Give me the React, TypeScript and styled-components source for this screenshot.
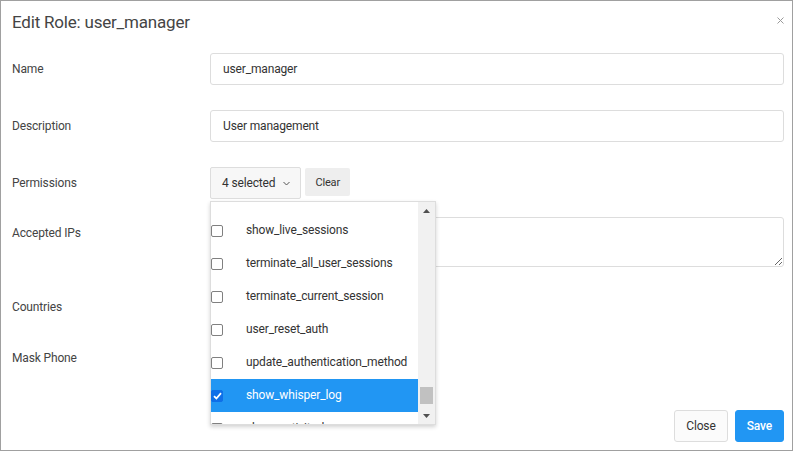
import React from "react";
import styled, { createGlobalStyle } from "styled-components";

const GlobalStyle = createGlobalStyle`
  html, body {
    margin: 0;
    padding: 0;
    background: #ffffff;
  }
  body {
    font-family: Roboto, "Liberation Sans", Arial, sans-serif;
    color: #333333;
    letter-spacing: -0.15px;
  }
  * {
    box-sizing: border-box;
  }
`;

const Frame = styled.div`
  position: relative;
  width: 793px;
  height: 451px;
  border: 1px solid #a0a0a0;
  background: #ffffff;
  display: flex;
  flex-direction: column;
`;

const Header = styled.div`
  display: flex;
  align-items: flex-start;
  justify-content: space-between;
  padding: 9px 6px 9px 11px;
`;

const Title = styled.h4`
  margin: 0;
  font-size: 17px;
  line-height: 24px;
  font-weight: 400;
  letter-spacing: -0.2px;
  color: #444444;
`;

const CloseX = styled.button`
  width: 12px;
  height: 12px;
  margin-top: 4px;
  padding: 0;
  border: 0;
  background: transparent;
  display: flex;
  align-items: center;
  justify-content: center;
`;

const Body = styled.div`
  padding: 10px 8px 0 11px;
`;

const Row = styled.div<{ $after: number }>`
  display: grid;
  grid-template-columns: 198px 1fr;
  align-items: start;
  margin-bottom: ${(p) => p.$after}px;
`;

const Label = styled.label`
  font-size: 12px;
  line-height: 32px;
  color: #444444;
`;

const TextInput = styled.input`
  width: 100%;
  height: 32px;
  border: 1px solid #dddddd;
  border-radius: 3px;
  padding: 0 12px;
  font: inherit;
  font-size: 12px;
  letter-spacing: inherit;
  color: #333333;
  outline: none;
`;

const TextArea = styled.textarea`
  display: block;
  width: 100%;
  height: 50px;
  border: 1px solid #dddddd;
  border-radius: 3px;
  padding: 6px 12px;
  font: inherit;
  font-size: 12px;
  resize: vertical;
  outline: none;
`;

const Control = styled.div`
  position: relative;
  display: flex;
  align-items: flex-start;
  gap: 4px;
  min-height: 32px;
`;

const SelectButton = styled.button`
  height: 32px;
  display: flex;
  align-items: center;
  gap: 8px;
  padding: 0 10px 0 11px;
  border: 1px solid #dddddd;
  border-radius: 2px;
  background: #f7f7f7;
  font: inherit;
  font-size: 12px;
  letter-spacing: inherit;
  color: #333333;
`;

const ClearButton = styled.button`
  height: 28px;
  margin-top: 1px;
  padding: 0 10px;
  border: 0;
  border-radius: 2px;
  background: #eeeeee;
  font: inherit;
  font-size: 11px;
  letter-spacing: inherit;
  color: #333333;
`;

const Dropdown = styled.div`
  position: absolute;
  top: calc(100% + 2px);
  left: 0;
  z-index: 10;
  width: 226px;
  height: 224px;
  display: flex;
  background: #ffffff;
  border: 1px solid #dddddd;
  box-shadow: 0 2px 4px rgba(0, 0, 0, 0.18);
`;

const ListViewport = styled.div`
  flex: 1;
  overflow: hidden;
`;

const List = styled.ul<{ $offset: number }>`
  list-style: none;
  margin: 0;
  padding: ${(p) => p.$offset}px 0 0;
`;

const Item = styled.li<{ $active?: boolean }>`
  height: 33px;
  display: flex;
  align-items: center;
  gap: 23px;
  padding-bottom: 1px;
  font-size: 12px;
  color: ${(p) => (p.$active ? "#ffffff" : "#333333")};
  background: ${(p) => (p.$active ? "#2196f3" : "transparent")};
`;

const Box = styled.span<{ $checked?: boolean }>`
  width: 12px;
  height: 12px;
  flex: none;
  margin-top: 1px;
  border-radius: 2px;
  border: 1px solid ${(p) => (p.$checked ? "#0f6fe8" : "#808080")};
  background: ${(p) => (p.$checked ? "#0f6fe8" : "#ffffff")};
  display: flex;
  align-items: center;
  justify-content: center;
`;

const Scrollbar = styled.div`
  width: 17px;
  display: flex;
  flex-direction: column;
  background: #f1f1f1;
`;

const ArrowButton = styled.div`
  height: 17px;
  display: flex;
  align-items: center;
  justify-content: center;
`;

const Track = styled.div`
  flex: 1;
  display: flex;
  flex-direction: column;
  justify-content: flex-end;
  padding: 0 2px 3px;
`;

const Thumb = styled.div`
  height: 17px;
  background: #c1c1c1;
`;

const Footer = styled.div`
  margin-top: auto;
  display: flex;
  justify-content: flex-end;
  gap: 7px;
  padding: 0 8px 8px;
`;

const FooterButton = styled.button<{ $primary?: boolean }>`
  height: 32px;
  padding: 0 11px;
  border-radius: 3px;
  border: 1px solid ${(p) => (p.$primary ? "#2196f3" : "#dddddd")};
  background: ${(p) => (p.$primary ? "#2196f3" : "#fbfbfb")};
  color: ${(p) => (p.$primary ? "#ffffff" : "#333333")};
  font: inherit;
  font-size: 12px;
  letter-spacing: inherit;
  font-weight: ${(p) => (p.$primary ? 500 : 400)};
`;

const permissions = [
  { name: "show_live_sessions", checked: false },
  { name: "terminate_all_user_sessions", checked: false },
  { name: "terminate_current_session", checked: false },
  { name: "user_reset_auth", checked: false },
  { name: "update_authentication_method", checked: false },
  { name: "show_whisper_log", checked: true },
  { name: "show_activity_log", checked: false },
];

const Check = () => (
  <svg width="9" height="8" viewBox="0 0 9 8">
    <path d="M1 4.2 L3.4 6.5 L8 1.2" fill="none" stroke="#fff" strokeWidth="1.8" />
  </svg>
);

export default function App() {
  return (
    <Frame>
      <GlobalStyle />
      <Header>
        <Title>Edit Role: user_manager</Title>
        <CloseX aria-label="close">
          <svg width="7" height="7" viewBox="0 0 7 7">
            <path d="M0.5 0.5 L6.5 6.5 M6.5 0.5 L0.5 6.5" stroke="#9a9a9a" strokeWidth="1" />
          </svg>
        </CloseX>
      </Header>
      <Body>
        <Row $after={25}>
          <Label>Name</Label>
          <TextInput defaultValue="user_manager" />
        </Row>
        <Row $after={25}>
          <Label>Description</Label>
          <TextInput defaultValue="User management" />
        </Row>
        <Row $after={18}>
          <Label>Permissions</Label>
          <Control>
            <SelectButton>
              4 selected
              <svg width="7" height="5" viewBox="0 0 7 5">
                <path d="M0.5 1 L3.5 4 L6.5 1" fill="none" stroke="#555" strokeWidth="1" />
              </svg>
            </SelectButton>
            <ClearButton>Clear</ClearButton>
            <Dropdown>
              <ListViewport>
                <List $offset={12}>
                  {permissions.map((p) => (
                    <Item key={p.name} $active={p.checked}>
                      <Box $checked={p.checked}>{p.checked && <Check />}</Box>
                      {p.name}
                    </Item>
                  ))}
                </List>
              </ListViewport>
              <Scrollbar>
                <ArrowButton>
                  <svg width="7" height="4" viewBox="0 0 7 4">
                    <path d="M0 4 L3.5 0 L7 4 Z" fill="#505050" />
                  </svg>
                </ArrowButton>
                <Track>
                  <Thumb />
                </Track>
                <ArrowButton>
                  <svg width="7" height="4" viewBox="0 0 7 4">
                    <path d="M0 0 L3.5 4 L7 0 Z" fill="#505050" />
                  </svg>
                </ArrowButton>
              </Scrollbar>
            </Dropdown>
          </Control>
        </Row>
        <Row $after={24}>
          <Label>Accepted IPs</Label>
          <TextArea />
        </Row>
        <Row $after={19}>
          <Label>Countries</Label>
          <Control />
        </Row>
        <Row $after={0}>
          <Label>Mask Phone</Label>
          <Control />
        </Row>
      </Body>
      <Footer>
        <FooterButton>Close</FooterButton>
        <FooterButton $primary>Save</FooterButton>
      </Footer>
    </Frame>
  );
}
